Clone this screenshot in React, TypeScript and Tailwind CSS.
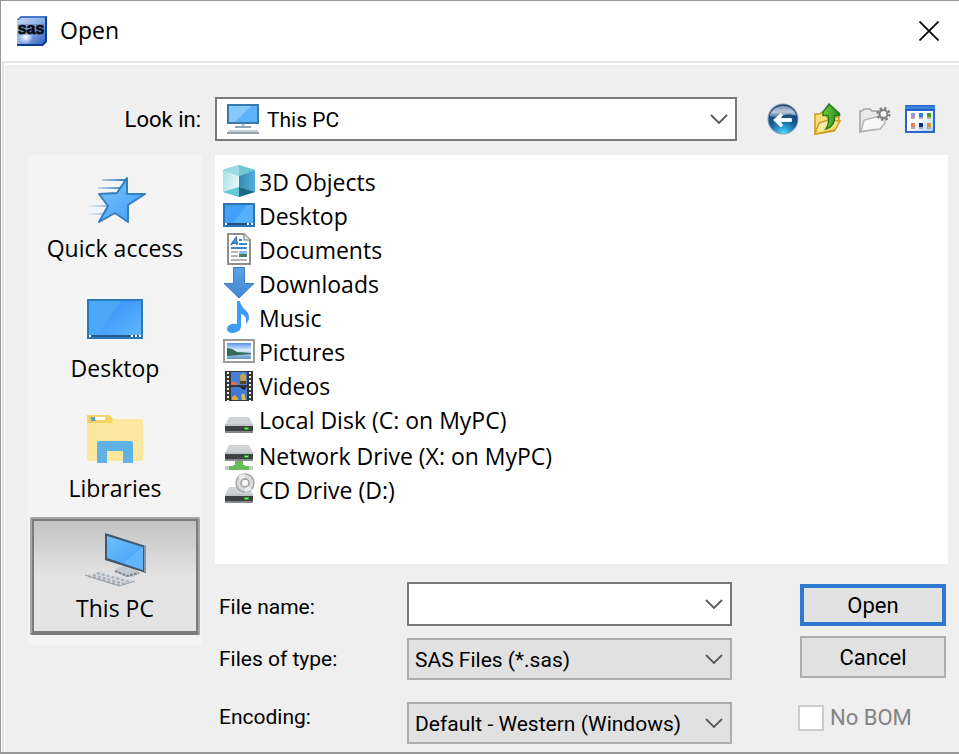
import { useState } from "react";
import type { ReactNode } from "react";

const SHELL_FONT = "font-['Open_Sans','Noto_Sans',sans-serif]";
const DIALOG_FONT = "font-['Roboto','Liberation_Sans',sans-serif]";

function SasLogo() {
  return (
    <svg width="30" height="30" viewBox="0 0 30 30" aria-hidden="true">
      <defs>
        <linearGradient id="sas-bg" x1="0" y1="0" x2="1" y2="1">
          <stop offset="0" stopColor="#c0d6f4" />
          <stop offset="0.5" stopColor="#8db0e6" />
          <stop offset="1" stopColor="#2f5fc0" />
        </linearGradient>
        <radialGradient id="sas-glow">
          <stop offset="0" stopColor="#ffffff" />
          <stop offset="1" stopColor="#ffffff" stopOpacity="0" />
        </radialGradient>
      </defs>
      <path d="M4 0H30V26L26 30H0V4Z" fill="#0d3a94" />
      <path d="M4 0H30L28 2H4L2 4V28H0V4Z" fill="#4a74c8" />
      <path d="M4 2H28V25L25 28H0V4H2Z" fill="url(#sas-bg)" />
      <circle cx="9" cy="21" r="7" fill="url(#sas-glow)" />
      <rect x="1" y="8" width="26" height="11" fill="#3b4e70" opacity="0.3" />
      <text x="14" y="18" textAnchor="middle" fontFamily="Liberation Sans, sans-serif" fontWeight="700" fontSize="16" fill="#0a0c12" stroke="#0a0c12" strokeWidth="0.6">sas</text>
    </svg>
  );
}

function CloseIcon() {
  return (
    <svg width="20" height="20" viewBox="0 0 20 20" aria-hidden="true">
      <path d="M0.5 0.5L19.5 19.5M19.5 0.5L0.5 19.5" stroke="#000" strokeWidth="1.7" fill="none" />
    </svg>
  );
}

function Chevron() {
  return (
    <svg width="18" height="12" viewBox="0 0 18 12" aria-hidden="true">
      <path d="M1 2L9 10L17 2" stroke="#5a5a5a" strokeWidth="1.8" fill="none" />
    </svg>
  );
}

function MonitorIcon() {
  return (
    <svg width="32" height="32" viewBox="0 0 32 32" aria-hidden="true">
      <rect x="0" y="1" width="32" height="20" fill="#3b79ad" />
      <rect x="2" y="3" width="28" height="16" fill="#5cb2fa" />
      <path d="M2 3H24L8 19H2Z" fill="#86c8fb" />
      <rect x="14" y="21" width="4" height="2" fill="#c3ccd3" />
      <rect x="8" y="23" width="16" height="2" fill="#8fa3b4" />
      <rect x="1" y="27" width="30" height="2" fill="#c6cdd3" />
      <rect x="0" y="29" width="32" height="2" fill="#93a3b4" />
    </svg>
  );
}

function BackIcon() {
  return (
    <svg width="32" height="32" viewBox="0 0 32 32" aria-hidden="true">
      <defs>
        <radialGradient id="back-bg" cx="0.5" cy="1" r="0.95">
          <stop offset="0" stopColor="#5fe0ff" />
          <stop offset="0.25" stopColor="#2c9bd6" />
          <stop offset="0.55" stopColor="#15568f" />
          <stop offset="1" stopColor="#1d4273" />
        </radialGradient>
        <linearGradient id="back-shine" x1="0" y1="0" x2="0" y2="1">
          <stop offset="0" stopColor="#7590b0" />
          <stop offset="0.55" stopColor="#bccada" />
          <stop offset="1" stopColor="#4d7299" />
        </linearGradient>
      </defs>
      <circle cx="16" cy="16" r="15.5" fill="#8aa0b6" />
      <circle cx="16" cy="16" r="14.5" fill="url(#back-bg)" />
      <path d="M2.5 13A14 14 0 0 1 29.5 13C24 11 20 11 16 12.5C11 14.500 6 14.500 2.500 13Z" fill="url(#back-shine)" />
      <path d="M6.500 17L14 10.500L15.500 12L13.500 15.500H24.500V18.500H13.500L15.500 22.500L14 24Z" fill="#fff" stroke="#fff" strokeWidth="0.8" />
    </svg>
  );
}

function UpFolderIcon() {
  return (
    <svg width="28" height="32" viewBox="0 0 28 32" aria-hidden="true">
      <defs>
        <linearGradient id="up-folder" x1="0" y1="0" x2="1" y2="1">
          <stop offset="0" stopColor="#fffbd8" />
          <stop offset="1" stopColor="#f3cf4b" />
        </linearGradient>
        <linearGradient id="up-arrow" x1="0" y1="0" x2="1" y2="0">
          <stop offset="0" stopColor="#7ccb3c" />
          <stop offset="1" stopColor="#1f8a20" />
        </linearGradient>
      </defs>
      <path d="M2 31V11H7L9 9H14V14H26V18L21 28Z" fill="#f9df7e" stroke="#cf9b1e" strokeWidth="1.5" />
      <path d="M2 31L6 20L15 17L27 18L22 27Z" fill="url(#up-folder)" stroke="#cf9b1e" strokeWidth="1.5" />
      <path d="M16 1L26.5 10.500V12.500H21.500C22 19 20 24 13 26C16 22 16 17 15 12.500H10V9Z" fill="url(#up-arrow)" stroke="#20801d" strokeWidth="1.5" />
    </svg>
  );
}

function NewFolderIcon() {
  return (
    <svg width="32" height="32" viewBox="0 0 32 32" aria-hidden="true">
      <path d="M1 29V8H3L5 6H11L13 8H21V14L25 17V20L21 26L12 27Z" fill="#e9e9e9" stroke="#a4a4a4" strokeWidth="1.5" />
      <path d="M2 28.500L5 17L17 14L26 16V20L21 26L11 27Z" fill="#f9f9f9" stroke="#b5b5b5" strokeWidth="1.5" />
      <circle cx="24.5" cy="11" r="6" fill="none" stroke="#7b7b7b" strokeWidth="2" strokeDasharray="2.4 2.3" />
      <circle cx="24.5" cy="11" r="4" fill="#f2f2f2" stroke="#7d7d7d" strokeWidth="2" />
    </svg>
  );
}

function ViewMenuIcon() {
  const cells = [
    { x: 6, y: 8, fill: "#9b9bd0" },
    { x: 14, y: 8, fill: "#2d7fe0" },
    { x: 22, y: 8, fill: "#3f9a1e" },
    { x: 6, y: 18, fill: "#f27a55" },
    { x: 14, y: 18, fill: "#062f9c" },
    { x: 22, y: 18, fill: "#cf9a26" },
  ];
  return (
    <svg width="30" height="28" viewBox="0 0 30 28" aria-hidden="true">
      <defs>
        <linearGradient id="view-bg" x1="0" y1="0" x2="1" y2="1">
          <stop offset="0.45" stopColor="#ffffff" />
          <stop offset="1" stopColor="#a9cdfa" />
        </linearGradient>
      </defs>
      <rect width="30" height="28" fill="#2865c8" />
      <rect y="1" width="30" height="3" fill="#3a80dc" />
      <rect x="2" y="6" width="26" height="20" fill="url(#view-bg)" />
      {cells.map((c) => (
        <g key={`${c.x}-${c.y}`}>
          <rect x={c.x} y={c.y} width="4" height="4" fill={c.fill} />
          <rect x={c.x} y={c.y + 4} width="4" height="2" fill="#b0b0b0" />
        </g>
      ))}
    </svg>
  );
}

function QuickAccessIcon() {
  return (
    <svg width="64" height="56" viewBox="0 0 64 56" aria-hidden="true">
      <defs>
        <linearGradient id="star-bg" x1="0" y1="0" x2="1" y2="1">
          <stop offset="0" stopColor="#7cc6f8" />
          <stop offset="1" stopColor="#3d9bf6" />
        </linearGradient>
        <linearGradient id="star-trail" gradientUnits="userSpaceOnUse" x1="3" y1="0" x2="42" y2="0">
          <stop offset="0" stopColor="#4a9ede" stopOpacity="0" />
          <stop offset="1" stopColor="#2c7fc4" />
        </linearGradient>
      </defs>
      <g fill="url(#star-trail)">
        <rect x="19" y="7" width="23" height="2" />
        <rect x="15" y="15" width="23" height="2" />
        <rect x="5" y="33" width="21" height="2" />
        <rect x="2" y="41" width="21" height="2" />
      </g>
      <path d="M44 6V22H62L45 33V50L32 41L16 50L25 34L16 22L34 21L44 6Z" fill="url(#star-bg)" stroke="#337fc0" strokeWidth="2" strokeLinejoin="round" />
    </svg>
  );
}

function DesktopLargeIcon() {
  return (
    <svg width="56" height="56" viewBox="0 0 56 56" aria-hidden="true">
      <defs>
        <linearGradient id="desk-lg" x1="0" y1="0" x2="1" y2="1">
          <stop offset="0.4" stopColor="#419cf9" />
          <stop offset="1" stopColor="#60b6fb" />
        </linearGradient>
      </defs>
      <rect y="7" width="56" height="40" fill="#2b78bb" />
      <rect x="2" y="9" width="52" height="34" fill="url(#desk-lg)" />
      <path d="M2 9H34L10 43H2Z" fill="#4ba8f9" />
      <rect x="2" y="43" width="52" height="2" fill="#245c92" />
      <path d="M2 43h2v2h-2zM44 43h2v2h-2zM48 43h2v2h-2zM52 43h2v2h-2z" fill="#fff" />
    </svg>
  );
}

function LibrariesIcon() {
  return (
    <svg width="56" height="56" viewBox="0 0 56 56" aria-hidden="true">
      <path d="M0 7H54Q56 7 56 9V47Q56 49 54 49H2Q0 49 0 47Z" fill="#fbe7a0" />
      <path d="M0 3H23L26 7L24 11H0Z" fill="#f5d262" />
      <rect x="4" y="5" width="5" height="4" fill="#4fa7d6" />
      <rect x="8" y="5" width="10" height="3" fill="#fff" />
      <path d="M10 51V31Q10 29 12 29H44Q46 29 46 31V51H36V39H20V51Z" fill="#5eb3e4" />
    </svg>
  );
}

function ThisPcIcon() {
  return (
    <svg width="64" height="56" viewBox="0 0 64 56" aria-hidden="true">
      <defs>
        <linearGradient id="pc-screen" x1="0" y1="0" x2="1" y2="1">
          <stop offset="0" stopColor="#6fbffa" />
          <stop offset="1" stopColor="#3f9ff7" />
        </linearGradient>
      </defs>
      <path d="M33 36L44 33L52 36L56 41L50 45H44L33 40Z" fill="#c4cad0" />
      <path d="M32 39L44 44L56 41" fill="none" stroke="#7c858d" strokeWidth="2" strokeDasharray="3 1" />
      <path d="M22 1L63 14V41L22 28Z" fill="#41576a" />
      <path d="M24 4L60 15V38L24 26Z" fill="url(#pc-screen)" />
      <path d="M60 15V38L40 31Z" fill="#63b6fb" />
      <path d="M61 14h2v26h-2z" fill="#8899a6" />
      <path d="M2 43L17 39L52 49L36 54Z" fill="#d7dbdf" />
      <path d="M5 44L37 53M10 43L42 52M14 41L47 50" stroke="#a7afb6" strokeWidth="2" strokeDasharray="3 2" />
      <path d="M2 43L36 54L52 49" stroke="#969fa7" strokeWidth="1" fill="none" />
    </svg>
  );
}

function CubeIcon() {
  return (
    <svg width="32" height="32" viewBox="0 0 32 32" aria-hidden="true">
      <defs>
        <linearGradient id="cube-left" x1="0" y1="0" x2="1" y2="0.3">
          <stop offset="0" stopColor="#a9e2e6" />
          <stop offset="1" stopColor="#e2f6f6" />
        </linearGradient>
        <linearGradient id="cube-right" x1="0" y1="0" x2="1" y2="0">
          <stop offset="0" stopColor="#2e8db0" />
          <stop offset="1" stopColor="#55aedd" />
        </linearGradient>
      </defs>
      <path d="M16 0L32 5V27L16 32L0 27V5Z" fill="#7fd3dc" />
      <path d="M0 5L16 11V22L0 27Z" fill="url(#cube-left)" />
      <path d="M16 11L32 5V27L16 22Z" fill="url(#cube-right)" />
      <path d="M16 0L32 5L16 11L0 5Z" fill="#70c8d3" />
      <path d="M16 0V11L0 5Z" fill="#9bdde2" />
      <path d="M16 22L32 27L16 32Z" fill="#1f6782" />
      <path d="M16 22V32L0 27Z" fill="#66cbd6" />
    </svg>
  );
}

function DesktopSmallIcon() {
  return (
    <svg width="32" height="32" viewBox="0 0 32 32" aria-hidden="true">
      <rect y="4" width="32" height="24" fill="#2b74b8" />
      <rect x="2" y="6" width="28" height="18" fill="#57b0fb" />
      <path d="M2 6H24L10 24H2Z" fill="#429ffa" />
      <rect x="2" y="24" width="28" height="2" fill="#1c5486" />
      <path d="M2 24h2v2h-2zM24 24h2v2h-2zM28 24h2v2h-2z" fill="#fff" />
    </svg>
  );
}

function DocumentIcon() {
  return (
    <svg width="32" height="32" viewBox="0 0 32 32" aria-hidden="true">
      <path d="M5 1H21L27 7V31H5Z" fill="#fff" stroke="#8f8f8f" strokeWidth="2" />
      <path d="M21 1V7H27" fill="#e4e4e4" stroke="#9b9b9b" strokeWidth="1.5" />
      <path d="M8 12L13 5L14 12M10 10H15" fill="none" stroke="#2f7fc8" strokeWidth="2" />
      <path d="M16 7h3M16 11h8M8 15h16" stroke="#3a86cc" strokeWidth="2" />
      <path d="M8 19h7M8 23h7M8 27h16" stroke="#b4b4b4" strokeWidth="2" />
      <rect x="16" y="18" width="8" height="4" fill="#8dbdf2" />
      <rect x="16" y="21" width="8" height="3" fill="#4c7c66" />
    </svg>
  );
}

function DownloadIcon() {
  return (
    <svg width="32" height="32" viewBox="0 0 32 32" aria-hidden="true">
      <defs>
        <linearGradient id="dl-bg" x1="0" y1="0" x2="0" y2="1">
          <stop offset="0" stopColor="#5ea0ea" />
          <stop offset="1" stopColor="#3f86d2" />
        </linearGradient>
      </defs>
      <path d="M10.5 0.5H21.5V16.5H31L16 31L1 16.5H10.5Z" fill="url(#dl-bg)" stroke="#3b7cc6" strokeWidth="1" />
    </svg>
  );
}

function MusicIcon() {
  return (
    <svg width="32" height="32" viewBox="0 0 32 32" aria-hidden="true">
      <path d="M14 0H17C18 8 26 9 26 16C26 19 25 21 23 23C24 17 22 14 18 13V25C18 30 13 32 9 32C5 32 4 29 4 28C4 24 9 22 14 23Z" fill="#3d9cf3" />
    </svg>
  );
}

function PictureIcon() {
  return (
    <svg width="32" height="32" viewBox="0 0 32 32" aria-hidden="true">
      <defs>
        <linearGradient id="pic-sky" x1="0" y1="0" x2="0" y2="1">
          <stop offset="0" stopColor="#5b92ea" />
          <stop offset="0.45" stopColor="#dcefff" />
          <stop offset="1" stopColor="#5e93c4" />
        </linearGradient>
      </defs>
      <rect x="1" y="5" width="30" height="22" fill="#fff" stroke="#9b9b9b" strokeWidth="2" />
      <rect x="4" y="8" width="24" height="16" fill="url(#pic-sky)" />
      <path d="M4 13L9 14L14 17L28 18V19L4 21Z" fill="#336b55" />
    </svg>
  );
}

function VideoIcon() {
  return (
    <svg width="32" height="32" viewBox="0 -1 32 32" aria-hidden="true">
      <rect x="2" y="1" width="28" height="30" fill="#363636" />
      <path d="M5 2V31M27 2V31" stroke="#f2f2f2" strokeWidth="2" strokeDasharray="2 2" />
      <rect x="8" y="2" width="16" height="13" fill="#4a80dc" />
      <rect x="8" y="17" width="16" height="13" fill="#4578d2" />
      <path d="M8 13L11 11L15 14V15H8Z" fill="#d87058" />
      <path d="M17 6L20 3L23 6V14H18Z" fill="#c9a63c" />
      <path d="M17 11h6v3h-6z" fill="#5c451d" />
      <path d="M17 17H23L22 20L19 19Z" fill="#1e1e2a" />
      <path d="M9 27L12 25L15 28V30H9Z" fill="#d8ac35" />
      <path d="M18 25L21 23L23 30H19Z" fill="#d9bd4a" />
    </svg>
  );
}

function DriveBody({ y }: { y: number }) {
  return (
    <g transform={`translate(0 ${y})`}>
      <path d="M6 0H26L30 8H2Z" fill="#d0d3d6" />
      <rect x="2" y="7" width="28" height="2" fill="#c0c4c7" />
      <rect x="2" y="9" width="28" height="6" fill="#3e4144" />
      <rect x="2" y="14" width="28" height="2" fill="#84888b" />
      <rect x="21" y="10" width="5" height="3" fill="#2f9a35" />
      <rect x="22" y="11" width="3" height="1" fill="#8ff08a" />
    </g>
  );
}

function DiskIcon() {
  return (
    <svg width="32" height="32" viewBox="0 0 32 32" aria-hidden="true">
      <DriveBody y={14} />
    </svg>
  );
}

function NetworkDriveIcon() {
  return (
    <svg width="32" height="32" viewBox="0 0 32 32" aria-hidden="true">
      <DriveBody y={6} />
      <path d="M12 22H20V26H22V27H28V31H4V27H10V26H12Z" fill="#69bb57" />
      <path d="M2 27h4v4h-4zM26 27h4v4h-4z" fill="#c7cccf" />
    </svg>
  );
}

function CdDriveIcon() {
  return (
    <svg width="32" height="32" viewBox="0 0 32 32" aria-hidden="true">
      <DriveBody y={14} />
      <circle cx="22" cy="10" r="9" fill="#d9dadb" stroke="#a4a6a8" strokeWidth="1.5" />
      <path d="M22 10L15 4A9 9 0 0 1 22 1ZM22 10L29 16A9 9 0 0 1 22 19Z" fill="#eeeeee" />
      <circle cx="22" cy="10" r="4" fill="#f4f4f4" stroke="#999c9e" strokeWidth="1.5" />
      <circle cx="22" cy="10" r="1.5" fill="#fff" />
    </svg>
  );
}

const places: { name: string; icon: ReactNode }[] = [
  { name: "Quick access", icon: <QuickAccessIcon /> },
  { name: "Desktop", icon: <DesktopLargeIcon /> },
  { name: "Libraries", icon: <LibrariesIcon /> },
  { name: "This PC", icon: <ThisPcIcon /> },
];

const groups: { name: string; icon: ReactNode }[][] = [
  [
    { name: "3D Objects", icon: <CubeIcon /> },
    { name: "Desktop", icon: <DesktopSmallIcon /> },
    { name: "Documents", icon: <DocumentIcon /> },
    { name: "Downloads", icon: <DownloadIcon /> },
    { name: "Music", icon: <MusicIcon /> },
    { name: "Pictures", icon: <PictureIcon /> },
    { name: "Videos", icon: <VideoIcon /> },
    { name: "Local Disk (C: on MyPC)", icon: <DiskIcon /> },
  ],
  [
    { name: "Network Drive (X: on MyPC)", icon: <NetworkDriveIcon /> },
    { name: "CD Drive (D:)", icon: <CdDriveIcon /> },
  ],
];

function SelectBox({ id, options }: { id: string; options: string[] }) {
  return (
    <div className="relative">
      <select id={id} className="block h-[42px] w-full appearance-none border-2 border-[#adadad] bg-[#e1e1e1] pt-[2px] pr-9 pl-[6px] text-[21px] text-black outline-none">
        {options.map((o) => (
          <option key={o}>{o}</option>
        ))}
      </select>
      <span className="pointer-events-none absolute inset-y-0 right-[9px] flex items-center">
        <Chevron />
      </span>
    </div>
  );
}

export default function App() {
  const [place, setPlace] = useState("This PC");
  const [fileName, setFileName] = useState("");

  return (
    <div className={`flex min-h-screen flex-col border-t border-b-2 border-l border-[#999999] bg-white text-[21px] leading-[28px] text-black ${DIALOG_FONT}`}>
      <header className={`flex h-[60px] items-center gap-[13px] pr-5 pl-4 text-[23px] ${SHELL_FONT}`}>
        <SasLogo />
        <h1 className="flex-1 pb-[2px]">Open</h1>
        <button type="button" aria-label="Close">
          <CloseIcon />
        </button>
      </header>

      <main className="ml-px flex flex-1 flex-col border-t-2 border-l-2 border-[#e3e3e3]">
        <div className="flex flex-1 flex-col gap-[14px] border-t-2 border-l border-white bg-[#efefef] pt-8 pr-[11px] pb-2 pl-6">
          <div className="flex items-center">
            <label htmlFor="look-in" className="w-[186px] shrink-0 pt-[2px] pr-[14px] text-right text-[22px]">Look in:</label>
            <div className="relative min-w-0 flex-1">
              <select id="look-in" className="block h-11 w-full appearance-none border-2 border-[#7a7a7a] bg-white pt-[2px] pr-10 pl-[50px] text-[21px] text-black outline-none">
                <option>This PC</option>
              </select>
              <span className="pointer-events-none absolute inset-y-0 left-3 flex items-center">
                <MonitorIcon />
              </span>
              <span className="pointer-events-none absolute inset-y-0 right-[9px] flex items-center">
                <Chevron />
              </span>
            </div>
            <div className="ml-[30px] flex w-[181px] shrink-0 items-center gap-[14px]">
              <button type="button" aria-label="Go to last folder visited"><BackIcon /></button>
              <button type="button" aria-label="Up one level"><UpFolderIcon /></button>
              <button type="button" aria-label="Create new folder" className="ml-1"><NewFolderIcon /></button>
              <button type="button" aria-label="View menu"><ViewMenuIcon /></button>
            </div>
          </div>

          <div className="-ml-px flex items-start gap-[13px]">
            <nav aria-label="Places" className={`flex w-[174px] shrink-0 flex-col gap-[2px] bg-[#f4f4f4] px-[2px] pt-[2px] pb-[10px] text-[23px] ${SHELL_FONT}`}>
              {places.map((p) => (
                <button
                  key={p.name}
                  type="button"
                  aria-pressed={place === p.name}
                  onClick={() => setPlace(p.name)}
                  className={
                    place === p.name
                      ? "flex h-[118px] flex-col items-center gap-[6px] rounded-[2px] border-2 border-[#a6a6a6] border-b-[#7b7b7b] bg-linear-to-b from-[#c2c2c2] to-[#e3e3e3] to-50% pt-[13px] inset-shadow-[0_0_0_2px_#7b7b7b]"
                      : "flex h-[118px] flex-col items-center gap-[6px] border-2 border-transparent pt-[13px]"
                  }
                >
                  {p.icon}
                  <span>{p.name}</span>
                </button>
              ))}
            </nav>

            <div className="flex min-w-0 flex-1 flex-col gap-[18px]">
              <div className={`flex h-[409px] flex-col gap-[2px] bg-white pt-[10px] pl-2 text-[23px] leading-[34px] ${SHELL_FONT}`}>
                {groups.map((items, i) => (
                  <ul key={i}>
                    {items.map((item) => (
                      <li key={item.name} className="flex h-[34px] items-start gap-1">
                        {item.icon}
                        <span>{item.name}</span>
                      </li>
                    ))}
                  </ul>
                ))}
              </div>

              <form className="flex items-start pr-[2px]" onSubmit={(e) => e.preventDefault()}>
                <div className="flex w-[192px] shrink-0 flex-col pt-[11px] pl-1">
                  <label htmlFor="file-name" className="mb-6">File name:</label>
                  <label htmlFor="file-type" className="mb-[30px]">Files of type:</label>
                  <label htmlFor="encoding">Encoding:</label>
                </div>
                <div className="flex min-w-0 flex-1 flex-col">
                  <div className="mb-3 flex h-11 items-center border-2 border-[#7a7a7a] bg-white pr-[7px]">
                    <input
                      id="file-name"
                      type="text"
                      value={fileName}
                      onChange={(e) => setFileName(e.target.value)}
                      className="h-full min-w-0 flex-1 bg-white px-[6px] outline-none"
                    />
                    <button type="button" aria-label="Recent file names">
                      <Chevron />
                    </button>
                  </div>
                  <div className="mb-[22px]">
                    <SelectBox id="file-type" options={["SAS Files (*.sas)"]} />
                  </div>
                  <SelectBox id="encoding" options={["Default - Western (Windows)"]} />
                </div>
                <div className="ml-[68px] flex w-[146px] shrink-0 flex-col pt-[2px] text-[22px]">
                  <button type="submit" className="mb-[10px] h-[42px] border-4 border-[#2f78d2] bg-[#e1e1e1] pt-[2px]">Open</button>
                  <button type="button" className="mb-[26px] h-[42px] border-2 border-[#adadad] bg-[#e1e1e1] pt-[2px]">Cancel</button>
                  <label className="-ml-[2px] flex items-center gap-[6px] text-[#838383]">
                    <input type="checkbox" disabled className="size-[26px] appearance-none border-2 border-[#cccccc] bg-white" />
                    No BOM
                  </label>
                </div>
              </form>
            </div>
          </div>
        </div>
      </main>
    </div>
  );
}
